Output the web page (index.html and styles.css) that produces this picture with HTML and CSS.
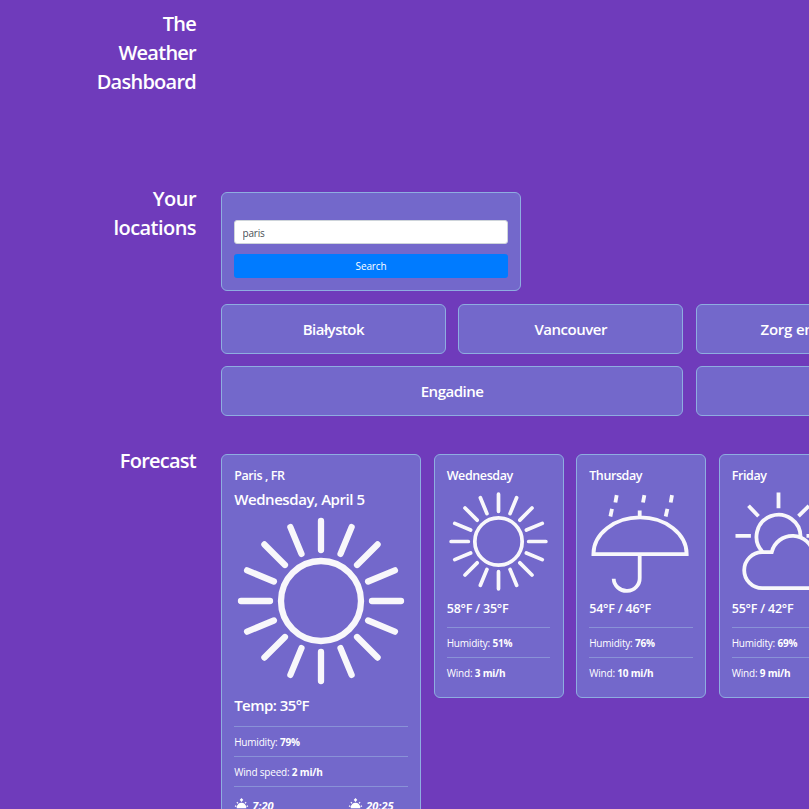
FILE: index.html
```
<!DOCTYPE html>
<html lang="en">
<head>
<meta charset="utf-8">
<title>The Weather Dashboard</title>
<link rel="stylesheet" href="styles.css">
</head>
<body>
<svg class="defs" aria-hidden="true">
  <symbol id="sun" viewBox="-87 -87 174 174">
    <circle r="40"/>
    <g id="rays"><path id="ray" d="M0-51V-80M0 51V80M-51 0H-80M51 0H80"/>
    <use href="#ray" transform="rotate(22.5)"/><use href="#ray" transform="rotate(45)"/><use href="#ray" transform="rotate(67.5)"/></g>
  </symbol>
  <symbol id="sunrise" viewBox="0 0 16 14">
    <path d="M1 12.5H15M3.5 10.3H12.5A4.5 4.5 0 0 0 3.5 10.3ZM8 4V1M6.5 2.5L8 1L9.5 2.5M1 8.5L2.5 9.2M15 8.5L13.5 9.2M3 4.5L4.3 5.8M13 4.5L11.7 5.8"/>
  </symbol>
</svg>
<header class="row head"><h1 class="label">The<br>Weather<br>Dashboard</h1></header>
<section class="row locations">
  <h2 class="label">Your<br>locations</h2>
  <div class="content">
    <form class="card search">
      <input class="field" type="text" value="paris">
      <button class="submit" type="button">Search</button>
    </form>
    <div class="cities">
      <div class="card city"><span>Białystok</span></div>
      <div class="card city"><span>Vancouver</span></div>
      <div class="card city long"><span>Zorg en Hoop</span></div>
      <div class="card city"></div>
      <div class="card city wide"><span>Engadine</span></div>
      <div class="card city wide"></div>
    </div>
  </div>
</section>
<section class="row forecast">
  <h2 class="label">Forecast</h2>
  <div class="content days">
    <article class="card today">
      <h4 class="place">Paris , FR</h4>
      <h3 class="date">Wednesday, April 5</h3>
      <svg class="icon"><use href="#sun"/></svg>
      <h3 class="temp">Temp: 35°F</h3>
      <p class="stat">Humidity: <b>79%</b></p>
      <p class="stat">Wind speed: <b>2 mi/h</b></p>
      <div class="stat times"><span><svg class="mini"><use href="#sunrise"/></svg><i>7:20</i></span><span><svg class="mini"><use href="#sunrise"/></svg><i>20:25</i></span></div>
    </article>
    <article class="card day">
      <h4>Wednesday</h4>
      <svg class="icon"><use href="#sun"/></svg>
      <h4 class="range">58°F / 35°F</h4>
      <p class="stat">Humidity: <b>51%</b></p>
      <p class="stat">Wind: <b>3 mi/h</b></p>
    </article>
    <article class="card day">
      <h4>Thursday</h4>
      <svg class="icon line" viewBox="0 0 103 103">
        <path d="M4.4 64.2A46.6 36.7 0 0 1 97.7 64.2ZM50.7 20.5V27.5M50.7 64.2V88A13 12.5 0 0 1 24.7 88.8"/>
        <path d="M27.7 5.2L26.4 12.5M23 18.8L21.4 26.5M55.4 5.2L54 12.5M83 5.2L81.7 12.5M78.4 18.8L76.7 26.5"/>
      </svg>
      <h4 class="range">54°F / 46°F</h4>
      <p class="stat">Humidity: <b>76%</b></p>
      <p class="stat">Wind: <b>10 mi/h</b></p>
    </article>
    <article class="card day">
      <h4>Friday</h4>
      <svg class="icon line" viewBox="0 0 103 103">
        <path d="M46.5 2.5V18.2M3.5 45.8H18.9M16.5 15.8L26.5 26.2M66.5 26.2L76.9 15.8M74.5 45.8H89.9"/>
        <path d="M30.5 61.8A22 22 0 1 1 68.5 47.5"/>
        <path d="M30.2 98.2A18 18 0 0 1 30.2 62.2H39.7A21.3 21.3 0 0 1 81.5 64.2A17 17 0 0 1 81.5 98.2Z"/>
      </svg>
      <h4 class="range">55°F / 42°F</h4>
      <p class="stat">Humidity: <b>69%</b></p>
      <p class="stat">Wind: <b>9 mi/h</b></p>
    </article>
  </div>
</section>
</body>
</html>
```
FILE: styles.css
```
* { box-sizing: border-box; }
html { overflow: hidden; }
body {
  margin: 0;
  height: 809px;
  overflow: hidden;
  background: #6f3bbb;
  color: #fff;
  font: 10px/15px "Open Sans", "Noto Sans", sans-serif;
}
h1, h2, h3, h4, p { margin: 0; font-weight: 600; }
.defs { position: absolute; width: 0; height: 0; }
.row { display: grid; grid-template-columns: 196px 937px; column-gap: 25px; }
.label { text-align: right; font-size: 20px; line-height: 29px; letter-spacing: -0.75px; }
h2.label { letter-spacing: -0.55px; }
.head { padding-top: 9px; height: 184px; }
.locations { height: 262px; }
.content { padding-top: 8px; }
.card { border: 1px solid #8eade0; border-radius: 6px; background: #7368cb; }
.search { width: 300px; height: 99px; padding: 27.4px 12px 12px; }
.field, .submit { display: block; width: 274px; height: 24px; border-radius: 3px; font: inherit; }
.field { margin-bottom: 9.6px; padding: 2px 7.5px 0; border: 1px solid #ced4da; background: #fff; color: #495057; letter-spacing: -0.2px; }
.submit { border: 0; background: #007bff; color: #fff; padding: 1px 0 0; letter-spacing: -0.15px; }
.cities { display: grid; grid-template-columns: repeat(4, 224.8px); gap: 12.5px; margin-top: 12.5px; }
.city { display: flex; align-items: center; justify-content: center; height: 50px; padding-top: 2px; font-size: 15px; font-weight: 600; letter-spacing: -0.5px; white-space: nowrap; }
.long { letter-spacing: -0.2px; }
.wide { grid-column: span 2; padding-top: 1px; }
.days { display: flex; gap: 12.5px; align-items: flex-start; }
.forecast .label { letter-spacing: -0.75px; }
.forecast .content { padding-top: 7.6px; }
.today, .day { flex: none; padding: 12.3px 12.2px; }
.today { width: 200px; height: 420px; }
.day { width: 130px; height: 244.5px; }
h4 { font-size: 12.5px; line-height: 18px; letter-spacing: -0.4px; white-space: nowrap; }
.date, .temp { font-size: 15px; line-height: 22px; letter-spacing: -0.43px; white-space: nowrap; }
.temp { letter-spacing: -0.55px; }
.date { margin-top: 3px; }
.icon { display: block; fill: none; stroke: #f8f7fb; stroke-width: 6.3; stroke-linecap: round; }
.today .icon { width: 174px; height: 174px; margin-top: 4px; }
.temp { margin: 6px 0 9.7px; }
.day .icon { width: 103px; height: 103px; margin-top: 5px; }
.day .line { stroke-width: 3.8; stroke-linecap: butt; }
.range { margin: 7px 0 9.5px; letter-spacing: -0.2px; }
.stat { height: 30px; padding-top: 8px; border-top: 1px solid #8992d7; font-weight: 400; letter-spacing: -0.2px; white-space: nowrap; }
.stat b { font-weight: 700; }
.stat.times { display: flex; font-size: 11px; font-weight: 700; padding-top: 11px; letter-spacing: 0; }
.times span { display: flex; flex: none; width: 114px; gap: 3px; }
.mini { width: 15px; height: 13px; fill: #fff; stroke: #fff; stroke-width: 1.3; }
```
